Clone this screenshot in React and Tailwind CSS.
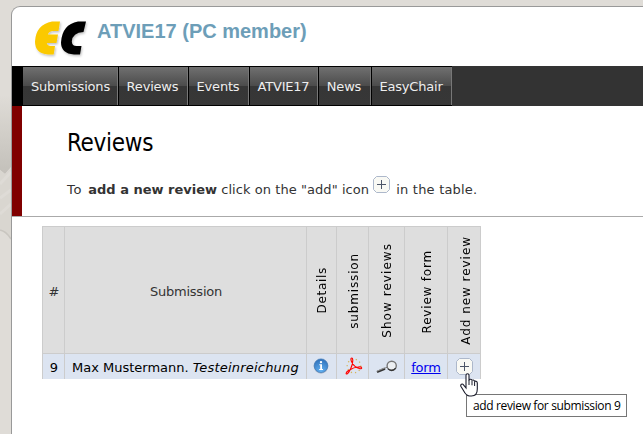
import React from "react";

const NAV = [
  ["Submissions", "w-[96px]"],
  ["Reviews", "w-[70px] pr-[2px]"],
  ["Events", "w-[61px] pr-[2px]"],
  ["ATVIE17", "w-[69px] pr-px"],
  ["News", "w-[53px] pr-[2px] text-[#55ffee]"],
  ["EasyChair", "w-[81px] pr-[2px]"],
];

// Label, column width, label offset from the header's lower edge.
const COLS = [
  ["Details", "w-[30px]", "tracking-[0.7px] mb-[39px] ml-[1px]"],
  ["submission", "w-[32px]", "tracking-[0.85px] mb-[24px] ml-[3px]"],
  ["Show reviews", "w-[36px]", "tracking-[1.05px] mb-[15px] ml-[1px]"],
  ["Review form", "w-[43px]", "tracking-[0.8px] mb-[20px] ml-[2px]"],
  ["Add new review", "w-[33px]", "tracking-[0.95px] mb-[8px] ml-[4px]"],
];

function AddIcon({ className = "" }) {
  return (
    <svg className={className} width="17" height="17" viewBox="0 0 17 17">
      <path d="M3.5.5h10l3 3v10l-3 3h-10l-3-3v-10z" fill="#f9f9f4" stroke="#adb8cb" strokeLinejoin="round" />
      <path d="M4 8.5h9M8.5 4v9" stroke="#4d5668" strokeWidth="1" shapeRendering="crispEdges" />
    </svg>
  );
}

function Logo() {
  return (
    <svg className="shrink-0" width="56" height="38" viewBox="0 0 56 38">
      <defs>
        <filter id="shade" x="-20%" y="-20%" width="150%" height="150%">
          <feDropShadow dx="1" dy="1.5" stdDeviation="1" floodOpacity=".25" />
        </filter>
      </defs>
      <g filter="url(#shade)" transform="translate(0 .5)">
        <path fill="#fbc904" d="M25 1 23.5 10.5H18Q14 10.5 12.8 14H23L21.5 22.5H11.8Q12.2 25.5 16 25.5H20L18.7 34H13Q0 33 0 21 1 4 17 1Z" />
        <path fill="#000" d="M51 1 48.5 11.5Q37.5 12 36.8 21 37 25.5 41.5 25.5H46.5L45 34H39Q26 33 26 22 27 4 43 1Z" />
      </g>
    </svg>
  );
}

function InfoIcon() {
  return (
    <svg width="16" height="16" viewBox="0 0 16 16">
      <defs>
        <radialGradient id="blue" cx=".5" cy=".9" r=".9">
          <stop stopColor="#65b3f3" />
          <stop offset="1" stopColor="#2d6fb9" />
        </radialGradient>
      </defs>
      <circle cx="8" cy="8.4" r="7.3" fill="#aab7ca" />
      <circle cx="8" cy="7.7" r="6.8" fill="url(#blue)" stroke="#3c78b8" strokeWidth=".7" />
      <circle cx="8" cy="4.1" r="1.2" fill="#fff" />
      <path d="M6.3 6.3H9V11H10V12H6.2V11H7.2V7.3H6.3Z" fill="#fff" />
    </svg>
  );
}

function PdfIcon() {
  return (
    <svg width="18" height="18" viewBox="0 0 18 18" fill="none">
      <circle cx="9" cy="9" r="6.8" stroke="#d5b45e" strokeWidth="1.3" strokeDasharray="1.2 3" />
      <path d="M6.8 1C5.2 1 6 3.8 7 5.5 8.5 8.8 11.5 10.8 15 11.8 17.6 12 17 9.8 14.5 9.8 10.5 10 6.2 11.8 3.2 13.8.8 15.5.6 17.4 2 17 4 16 7.8 8.5 7.8 3.8 7.8 2 7.5 1 6.8 1Z" stroke="#f00" strokeWidth="1.1" />
    </svg>
  );
}

function LensIcon() {
  return (
    <svg width="22" height="14" viewBox="0 0 22 14" fill="none">
      <path d="M1 12 9 8.7" stroke="#333" strokeWidth="2.4" />
      <path d="M1 11.2 9 7.8" stroke="#aaa" strokeWidth=".8" />
      <path d="M9 8.2 11 7.2" stroke="#777" />
      <ellipse cx="15.7" cy="5.8" rx="4.6" ry="4.5" fill="#eceff2" stroke="#777" strokeWidth="1.4" />
      <path d="M12 8.9Q16 12.4 19.7 8.2" stroke="#333" strokeWidth="1.2" />
    </svg>
  );
}

function Hand() {
  return (
    <svg className="absolute left-[460px] top-[373px]" width="18" height="24" viewBox="0 0 18 24">
      <path
        d="M6 15V2.2C6 .2 9 .2 9 2.2V7.5C9 5.8 12 5.8 12 7.8 12 6.5 14.6 6.7 14.6 8.8 15 7.6 17.3 8 17.3 10V16C17.3 20 15.5 23 11.5 23H9.5C6.5 23 5 20.5 3.6 17.8L1 13.5C0 11.5 2.3 10.2 3.5 11.8L6 15Z"
        fill="#fff" stroke="#1b1c2b" strokeWidth="1.1"
      />
      <path d="M9 7V12M12 8V12.3M14.6 9V13" stroke="#1b1c2b" />
    </svg>
  );
}

export default function App() {
  return (
    <div className="relative flex h-[434px] w-[643px] overflow-hidden bg-[#dfdcd7] font-['DejaVu_Sans',Verdana,sans-serif] text-[13px] text-[#333]">
      <svg className="shrink-0" width="11" height="434" viewBox="0 0 11 434">
        <defs>
          <linearGradient id="stone" x2="0" y2="1">
            <stop stopColor="#dfdcd7" />
            <stop offset=".5" stopColor="#d1cec8" />
            <stop offset="1" stopColor="#c3c0ba" />
          </linearGradient>
        </defs>
        <path d="M0 95H11V167L5 174 0 170Z" fill="url(#stone)" />
        <path d="M0 170 5 174 11 168V238L0 229Z" fill="#d9d6d0" />
        <path d="M0 184 11 172M0 198 11 190M0 214 11 204" stroke="#dedbd6" strokeWidth="3" />
        <path d="M0 230Q6 231 11 239" stroke="#c9c6c0" strokeWidth="1.5" fill="none" />
      </svg>
      <div className="mt-[6px] flex h-[440px] w-[650px] shrink-0 flex-col overflow-hidden rounded-tl-[9px] border-l border-t border-[#999] bg-white">
        <header className="flex h-[59px] shrink-0 pl-[23px] pt-[13px]">
          <Logo />
          <h1 className="ml-[6px] mt-[-1px] whitespace-nowrap font-['Liberation_Sans',Arial,sans-serif] text-[20px] font-bold leading-[24px] text-[#6d9eb8]">
            ATVIE17 (PC member)
          </h1>
        </header>
        <nav className="flex h-[40px] shrink-0 bg-[#333]">
          <div className="w-[10px] bg-black" />
          {NAV.map(([label, cls]) => (
            <div key={label} className={"flex items-center justify-center whitespace-nowrap border-y border-l border-black bg-[linear-gradient(#707070,#4b4b4b_50%,#363636_51%,#373737)] pt-px tracking-[-0.2px] text-[#eee] shadow-[inset_-1px_0_#777] " + cls}>
              {label}
            </div>
          ))}
        </nav>
        <section className="h-[111px] shrink-0 border-b border-[#aaa]">
          <div className="h-[110px] border-l-[10px] border-[#800000] pl-[45px] pt-[22px]">
            <h2 className="font-['DejaVu_Sans_Condensed','DejaVu_Sans',Tahoma,sans-serif] text-[24px] leading-[30px] tracking-[-0.3px] text-black [font-stretch:condensed]">Reviews</h2>
            <p className="mt-[16px] flex h-[30px] whitespace-pre leading-[32px]">
              <span className="tracking-[0.8px]">To </span>
              <b className="ml-px">add a new review</b>
              <span className="tracking-[0.06px]"> click on the "add" icon </span>
              <AddIcon className="mt-[2px] shrink-0" />
              <span className="ml-[6px] tracking-[0.2px]">in the table.</span>
            </p>
          </div>
        </section>
        <main className="pl-[30px] pt-[9px]">
          <div className="w-[439px] border-l border-t border-[#ccc]">
            <div className="flex h-[127px] border-b border-[#ccc] bg-[#dedede]">
              <div className="flex w-[22px] items-center justify-center border-r border-[#ccc] pl-px pt-[3px]">#</div>
              <div className="flex w-[242px] items-center justify-center border-r border-[#ccc] pl-px pt-[3px] tracking-[-0.25px]">Submission</div>
              {COLS.map(([label, width, text]) => (
                <div key={label} className={"flex shrink-0 items-end justify-center border-r border-[#ccc] " + width}>
                  <span className={"rotate-180 whitespace-nowrap text-[12px] leading-[16px] text-black [writing-mode:vertical-rl] " + text}>
                    {label}
                  </span>
                </div>
              ))}
            </div>
            <div className="flex h-[25px] bg-[#dce4f1] text-black">
              <div className="flex w-[22px] items-center justify-center border-r border-[#ccc] pl-px pt-[2px]">9</div>
              <div className="flex w-[242px] items-center whitespace-pre border-r border-[#ccc] pl-[7px] pt-[2px]">
                <span>Max Mustermann. </span>
                <i className="tracking-[0.2px]">Testeinreichung</i>
              </div>
              <div className="flex w-[30px] justify-center border-r border-[#ccc] pr-px pt-[4px]"><InfoIcon /></div>
              <div className="flex w-[32px] justify-center border-r border-[#ccc] pl-[2px] pt-[3px]"><PdfIcon /></div>
              <div className="flex w-[36px] justify-center border-r border-[#ccc] pl-px pt-[6px]"><LensIcon /></div>
              <div className="flex w-[43px] items-center justify-center border-r border-[#ccc] pt-[2px] tracking-[-0.2px] text-[#0000ee] underline">form</div>
              <div className="flex w-[33px] justify-center border-r border-[#ccc] pl-px pt-[4px]"><AddIcon /></div>
            </div>
          </div>
        </main>
      </div>
      <div className="absolute left-[466px] top-[394px] flex h-[23px] w-[161px] items-center whitespace-nowrap border border-[#767676] bg-white pl-[6px] pt-px font-['Open_Sans','Noto_Sans',sans-serif] text-[12px] tracking-[-0.36px] text-black">
        add review for submission 9
      </div>
      <Hand />
    </div>
  );
}
